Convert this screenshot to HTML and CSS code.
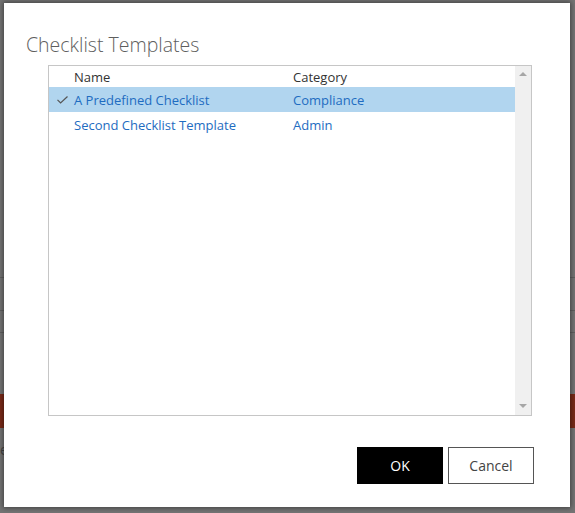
FILE: index.html
```html
<!DOCTYPE html>
<html lang="en">

<head>
    <meta charset="UTF-8">
    <meta name="viewport" content="width=device-width, initial-scale=1.0">
    <title>Checklist Templates</title>
    <link rel="stylesheet" href="styles.css">
</head>

<body>

    <!-- Page behind the modal (dimmed) -->
    <div class="backdrop">
        <div class="bd-line" style="top: 277px;"></div>
        <div class="bd-line" style="top: 310px;"></div>
        <div class="bd-line" style="top: 332px;"></div>
        <div class="bd-bar"></div>
        <div class="bd-text">e</div>
    </div>

    <!-- Dialog -->
    <div class="dialog">
        <h1 class="dialog-title">Checklist Templates</h1>

        <div class="listbox">
            <div class="list-body">
                <div class="list-row list-head">
                    <div class="cell-check"></div>
                    <div class="cell-name">Name</div>
                    <div class="cell-cat">Category</div>
                </div>
                <div class="list-row selected">
                    <div class="cell-check">
                        <svg width="11" height="8" viewBox="0 0 11 8">
                            <polyline points="0.5,3.8 3.6,7 10.5,0.5" fill="none" stroke="#555" stroke-width="1.2"/>
                        </svg>
                    </div>
                    <div class="cell-name">A Predefined Checklist</div>
                    <div class="cell-cat">Compliance</div>
                </div>
                <div class="list-row">
                    <div class="cell-check"></div>
                    <div class="cell-name">Second Checklist Template</div>
                    <div class="cell-cat">Admin</div>
                </div>
            </div>
            <div class="scrollbar">
                <div class="arrow up"></div>
                <div class="arrow down"></div>
            </div>
        </div>

        <div class="dialog-footer">
            <button class="btn btn-primary">OK</button>
            <button class="btn">Cancel</button>
        </div>
    </div>

</body>

</html>
```

FILE: styles.css
```css
/* Basic Reset */
body {
    margin: 0;
    padding: 0;
    width: 575px;
    height: 513px;
    overflow: hidden;
    font-family: 'Open Sans', 'Noto Sans', sans-serif;
    background-color: #747474;
    position: relative;
}

/* Dimmed page behind the dialog */
.backdrop {
    position: absolute;
    top: 0;
    left: 0;
    width: 100%;
    height: 100%;
}

.bd-line {
    position: absolute;
    left: 0;
    width: 100%;
    height: 1px;
    background: #606060;
}

.bd-bar {
    position: absolute;
    top: 394px;
    left: 0;
    width: 100%;
    height: 34px;
    background: #7a2a18;
}

.bd-text {
    position: absolute;
    top: 440px;
    left: 0;
    font-size: 14px;
    color: #444;
}

/* Dialog box */
.dialog {
    position: absolute;
    top: 3px;
    left: 4px;
    width: 566px;
    height: 504px;
    box-sizing: border-box;
    padding: 28px 36px 23px 22px;
    background: #fff;
    box-shadow: 0 0 5px 1px rgba(0, 0, 0, 0.45);
    display: flex;
    flex-direction: column;
}

.dialog-title {
    margin: 0;
    font-size: 19.5px;
    font-weight: 300;
    line-height: 28px;
    color: #5e5e5e;
}

/* List */
.listbox {
    margin: 6px 2px 0 22px;
    height: 351px;
    box-sizing: border-box;
    border: 1px solid #c6c6c6;
    display: flex;
}

.list-body {
    flex: 1;
}

.list-row {
    display: flex;
    align-items: center;
    height: 25px;
    font-size: 13px;
    color: #1e6cc1;
}

.list-row.list-head {
    height: 21px;
    padding-top: 1px;
    box-sizing: border-box;
    color: #333;
}

.list-row.selected {
    background: #b1d5ef;
}

.cell-check {
    width: 25px;
    display: flex;
    justify-content: center;
    padding-left: 2px;
    box-sizing: border-box;
}

.cell-name {
    width: 219px;
}

/* Scrollbar */
.scrollbar {
    width: 16px;
    background: #f0f0f0;
    display: flex;
    flex-direction: column;
    justify-content: space-between;
    align-items: center;
    padding: 6px 0 7px;
}

.arrow {
    width: 0;
    height: 0;
    border-left: 4px solid transparent;
    border-right: 4px solid transparent;
}

.arrow.up {
    border-bottom: 4px solid #a6a6a6;
}

.arrow.down {
    border-top: 4px solid #a6a6a6;
}

/* Footer buttons */
.dialog-footer {
    margin-top: 31px;
    display: flex;
    justify-content: flex-end;
    gap: 5px;
}

.btn {
    width: 86px;
    height: 37px;
    border: 1px solid #555;
    background: #fff;
    color: #444;
    font-family: 'Open Sans', 'Noto Sans', sans-serif;
    font-size: 14px;
    padding: 0;
}

.btn-primary {
    background: #000;
    border-color: #000;
    color: #fff;
}
```
